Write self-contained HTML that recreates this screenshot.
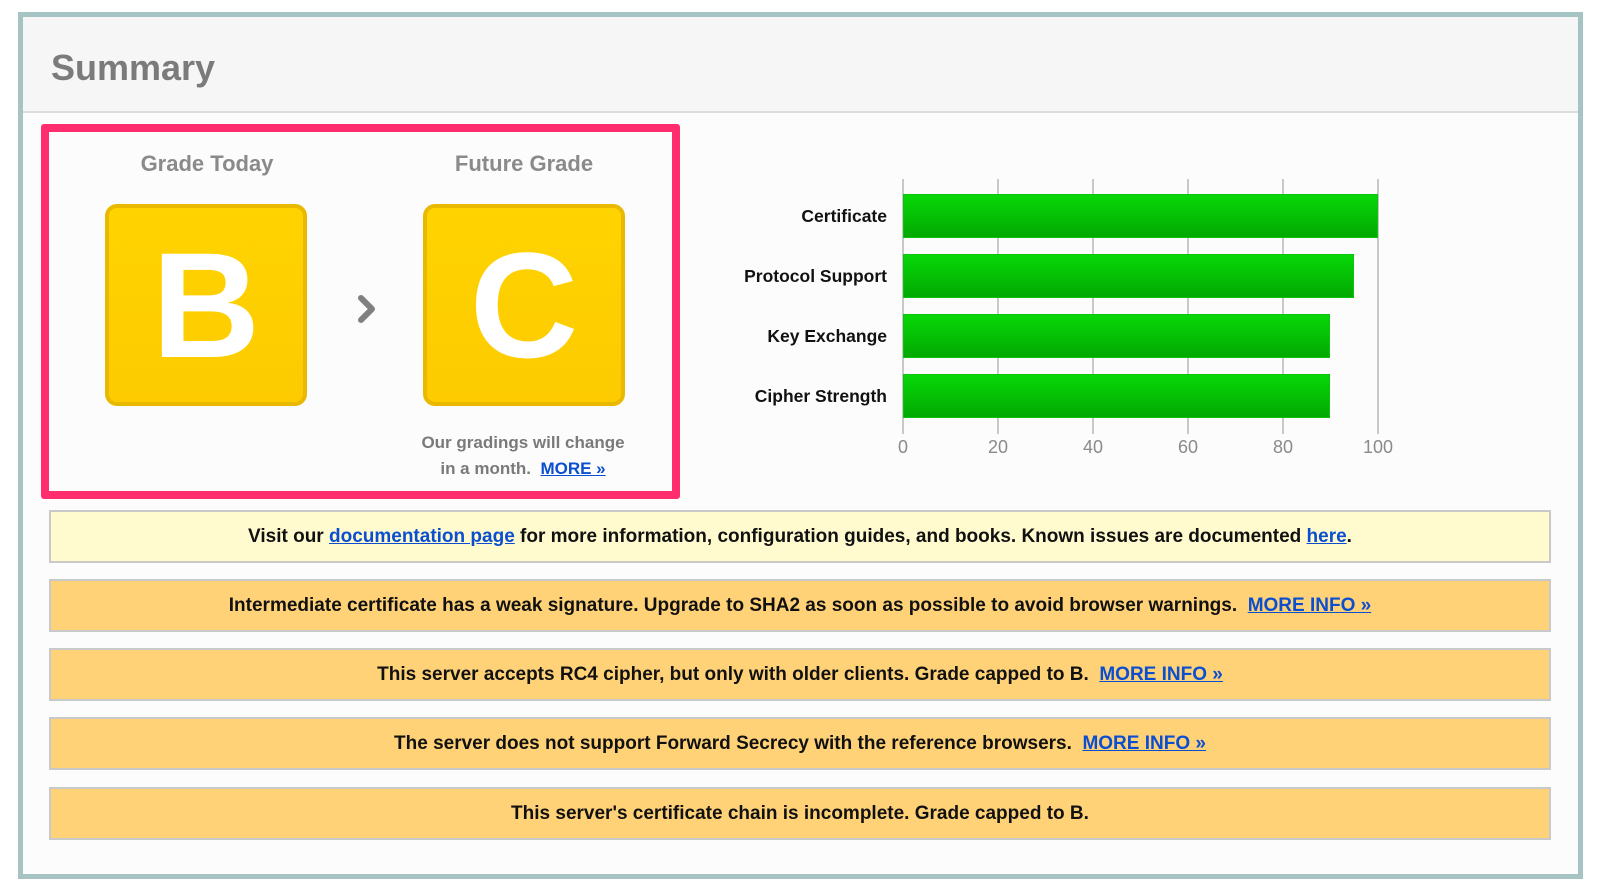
<!DOCTYPE html>
<html><head><meta charset="utf-8"><style>
*{margin:0;padding:0;box-sizing:border-box}
body{width:1600px;height:889px;background:#fff;font-family:"Liberation Sans",Arial,sans-serif;position:relative;overflow:hidden}
.frame{position:absolute;left:18px;top:12px;width:1565px;height:867px;border:5px solid #a7c4c4;background:#fcfcfc}
.hdr{position:absolute;left:0;top:0;right:0;height:96px;background:#f6f6f6;border-bottom:2px solid #dcdcdc}
.hdr h1{position:absolute;left:28px;top:30px;font-size:36px;color:#7b7b7b;font-weight:bold}
.abs{position:absolute}
.pink{left:41px;top:124px;width:639px;height:375px;border:8px solid #ff2d6e;border-radius:3px;background:#fcfcfc}
.gt{font-size:22px;font-weight:bold;color:#8a8a8a;text-align:center;width:300px}
.gbox{width:202px;height:202px;background:linear-gradient(#ffd300,#fdcb00);border:4px solid #e9b900;border-radius:12px;color:#fff;font-weight:bold;font-size:150px;text-align:center;line-height:194px}
.note{font-size:17px;font-weight:bold;color:#7a7a7a;text-align:center;width:300px;line-height:26px}
a{color:#0b4fd0;text-decoration:underline;font-weight:bold}
.lbl{font-size:17.5px;font-weight:bold;color:#111;text-align:right;width:200px;left:687px}
.grid{width:2px;background:#c8c8c8;top:179px;height:255px}
.bar{left:903px;height:44px;background:linear-gradient(#08d808,#02a802);border:1px solid #0cc40c}
.ax{font-size:18px;color:#8a8a8a;top:437px;width:60px;text-align:center}
.n{left:49px;width:1502px;height:53px;border:2px solid #c9c9c9;background:#ffd277;font-size:19px;font-weight:bold;color:#111;text-align:center;line-height:49px}
</style></head><body>
<div class="frame"><div class="hdr"><h1>Summary</h1></div></div>
<div class="abs pink"></div>
<div class="abs gt" style="left:57px;top:151px">Grade Today</div>
<div class="abs gt" style="left:374px;top:151px">Future Grade</div>
<div class="abs gbox" style="left:105px;top:204px">B</div>
<div class="abs gbox" style="left:423px;top:204px">C</div>
<svg class="abs" style="left:352px;top:290px" width="30" height="38"><path d="M9 8 L20 19 L9 30" fill="none" stroke="#808080" stroke-width="6" stroke-linecap="round" stroke-linejoin="round"/></svg>
<div class="abs note" style="left:373px;top:430px">Our gradings will change<br>in a month.&nbsp; <a>MORE »</a></div>

<div class="abs grid" style="left:902px"></div>
<div class="abs grid" style="left:997px"></div>
<div class="abs grid" style="left:1092px"></div>
<div class="abs grid" style="left:1187px"></div>
<div class="abs grid" style="left:1282px"></div>
<div class="abs grid" style="left:1377px"></div>
<div class="abs bar" style="top:194px;width:475px"></div>
<div class="abs bar" style="top:254px;width:451px"></div>
<div class="abs bar" style="top:314px;width:427px"></div>
<div class="abs bar" style="top:374px;width:427px"></div>
<div class="abs lbl" style="top:206px">Certificate</div>
<div class="abs lbl" style="top:266px">Protocol Support</div>
<div class="abs lbl" style="top:326px">Key Exchange</div>
<div class="abs lbl" style="top:386px">Cipher Strength</div>
<div class="abs ax" style="left:873px">0</div>
<div class="abs ax" style="left:968px">20</div>
<div class="abs ax" style="left:1063px">40</div>
<div class="abs ax" style="left:1158px">60</div>
<div class="abs ax" style="left:1253px">80</div>
<div class="abs ax" style="left:1348px">100</div>

<div class="abs n" style="top:510px;background:#fffbcf">Visit our <a>documentation page</a> for more information, configuration guides, and books. Known issues are documented <a>here</a>.</div>
<div class="abs n" style="top:579px">Intermediate certificate has a weak signature. Upgrade to SHA2 as soon as possible to avoid browser warnings.&nbsp; <a>MORE INFO »</a></div>
<div class="abs n" style="top:648px">This server accepts RC4 cipher, but only with older clients. Grade capped to B.&nbsp; <a>MORE INFO »</a></div>
<div class="abs n" style="top:717px">The server does not support Forward Secrecy with the reference browsers.&nbsp; <a>MORE INFO »</a></div>
<div class="abs n" style="top:787px">This server's certificate chain is incomplete. Grade capped to B.</div>
</body></html>
